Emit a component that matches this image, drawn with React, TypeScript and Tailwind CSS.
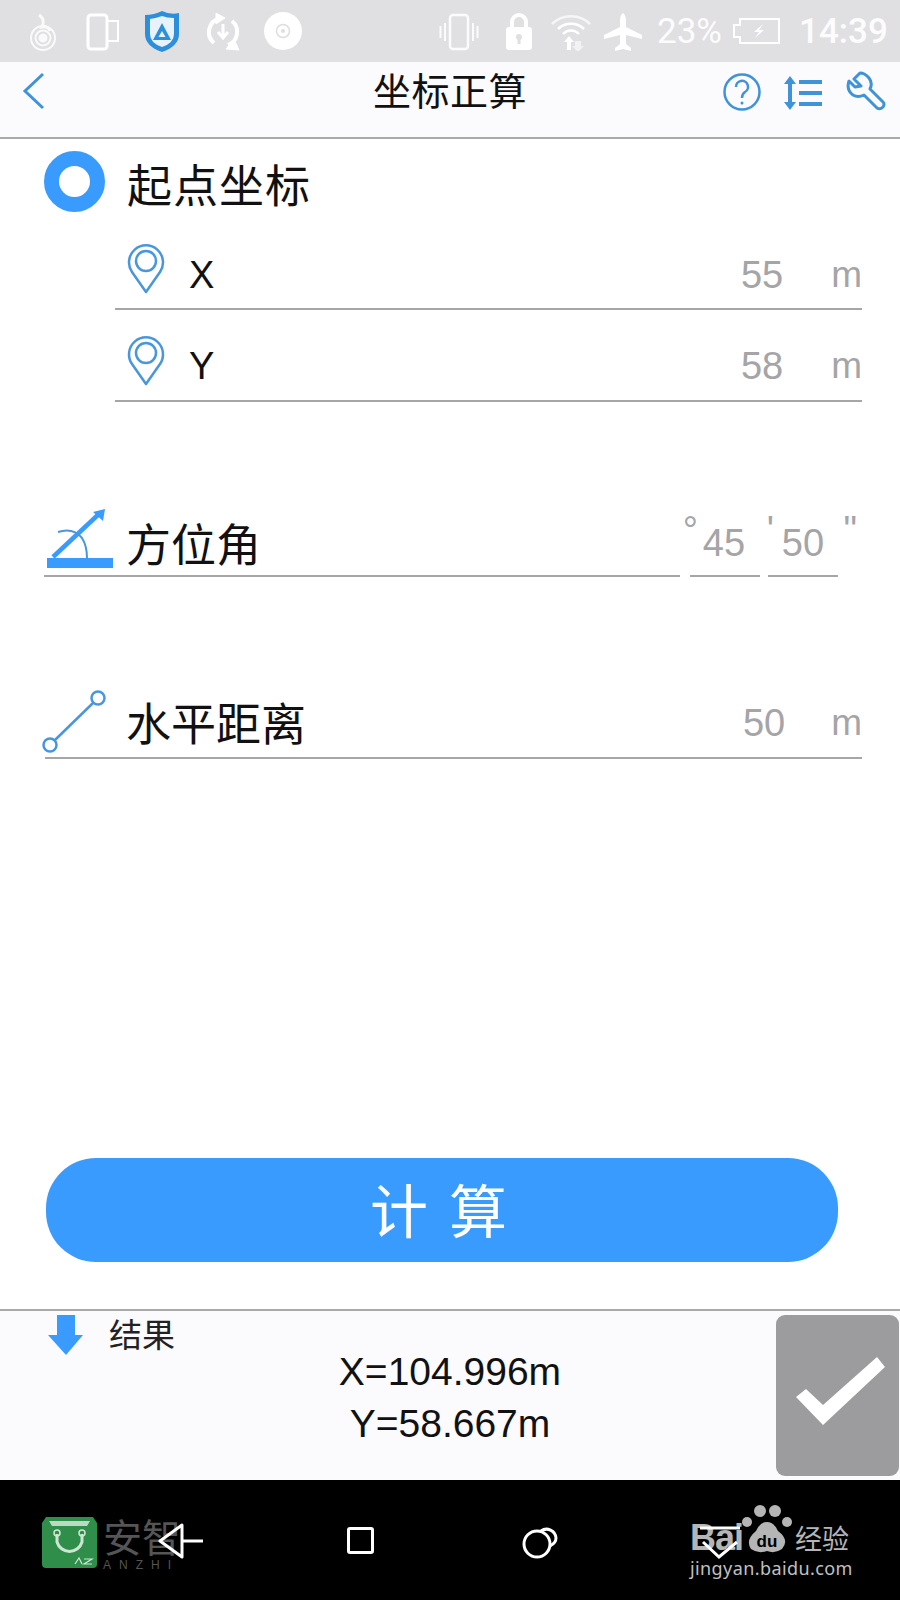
const CJK = "font-['Noto_Sans_CJK_SC','Noto_Sans',sans-serif]";
const LATIN = "font-['Liberation_Sans','Noto_Sans_CJK_SC',sans-serif]";

function StatusIcons() {
  return (
    <div className="h-[62px] bg-[#e0dfe2] flex items-center relative shrink-0 text-white">
      <svg className="absolute left-[28px] top-[13px]" width="30" height="38" viewBox="0 0 30 38" fill="none" stroke="#fff" strokeWidth="2" opacity="0.85">
        <path d="M11 2 c5 3 5 8 3 12 q6 -1 8 4" strokeWidth="3" />
        <circle cx="15" cy="25" r="12" />
        <circle cx="15" cy="25" r="7.5" />
        <circle cx="15" cy="25" r="3.5" fill="#fff" />
      </svg>
      <svg className="absolute left-[86px] top-[13px]" width="34" height="38" viewBox="0 0 34 38" fill="none" stroke="#fff">
        <rect x="2" y="2" width="19" height="34" rx="3" strokeWidth="3" />
        <rect x="21" y="8" width="11" height="20" strokeWidth="2" />
      </svg>
      <svg className="absolute left-[144px] top-[10px]" width="36" height="43" viewBox="0 0 36 43">
        <path d="M1 5 Q10 5 18 1 Q26 5 35 3 V24 Q35 36 18 42 Q1 36 1 24Z" fill="#2c8fdc" />
        <path d="M6 9 Q13 8 18 6 Q23 8 30 8 V24 Q30 33 18 37 Q6 33 6 24Z" fill="#e8f2fa" />
        <path d="M18 13 L27 30 H9Z" fill="#2c8fdc" />
        <path d="M18 21 L21.500 27 H14.500Z" fill="#e8f2fa" />
      </svg>
      <svg className="absolute left-[204px] top-[13px]" width="38" height="38" viewBox="0 0 38 38" fill="none" stroke="#fff" strokeWidth="4">
        <path d="M10 30 A14 14 0 0 1 16 5.500" />
        <path d="M28 8 A14 14 0 0 1 24 32" />
        <path d="M12 0 L21 5 L12 11Z" fill="#fff" strokeWidth="1" />
        <path d="M30 26 L35 37 L22 36Z" fill="#fff" strokeWidth="1" />
        <path d="M19 11 V24 M14 19 L19 25 L24 19" strokeWidth="3" />
      </svg>
      <svg className="absolute left-[264px] top-[12px]" width="38" height="38" viewBox="0 0 38 38" fill="none">
        <circle cx="19" cy="19" r="19" fill="#fff" />
        <circle cx="19" cy="19" r="6.500" stroke="#dedde0" strokeWidth="1.500" />
        <circle cx="19" cy="19" r="2" fill="#dedde0" />
      </svg>
      <svg className="absolute left-[439px] top-[13px]" width="40" height="38" viewBox="0 0 40 38" fill="none" stroke="#fff" opacity="0.9">
        <rect x="11" y="2" width="18" height="34" rx="3" strokeWidth="2.500" />
        <path d="M6 10 V28 M1.500 13 V25 M34 10 V28 M38.500 13 V25" strokeWidth="2" />
      </svg>
      <svg className="absolute left-[505px] top-[12px]" width="28" height="38" viewBox="0 0 28 38">
        <path d="M7 16 V10 A7 7 0 0 1 21 10 V16" fill="none" stroke="#fff" strokeWidth="4" />
        <rect x="1" y="15" width="26" height="23" rx="3" fill="#fff" />
        <circle cx="14" cy="25" r="3" fill="#e0dfe2" />
        <rect x="12.500" y="26" width="3" height="6" fill="#e0dfe2" />
      </svg>
      <svg className="absolute left-[550px] top-[11px]" width="42" height="40" viewBox="0 0 42 40" fill="none" stroke="#fff" strokeWidth="2.500">
        <path d="M2 13 A27 27 0 0 1 40 13" opacity="0.7" />
        <path d="M8 18 A19 19 0 0 1 34 18" />
        <path d="M13 23 A11 11 0 0 1 29 23" />
        <path d="M14 31 L19 25 L24 31 H21 V39 H17 V31Z" fill="#fff" stroke="none" />
        <path d="M25 30 H31 V35 H34 L28 41 L22 35 H25Z" fill="#fff" stroke="none" opacity="0.6" />
      </svg>
      <svg className="absolute left-[604px] top-[13px]" width="38" height="38" viewBox="0 0 38 38" fill="#fff">
        <path d="M19 0 Q22 2 22 8 V14 L38 22 V26 L22 22 V31 L27 35 V38 L19 36 L11 38 V35 L16 31 V22 L0 26 V22 L16 14 V8 Q16 2 19 0Z" />
      </svg>
      <span className="absolute left-[657px] top-[12px] text-[35px] leading-[40px] font-['Roboto',sans-serif] text-white/90">23%</span>
      <svg className="absolute left-[732px] top-[17px]" width="50" height="28" viewBox="0 0 50 28" fill="none" stroke="#fff" strokeWidth="2">
        <path d="M8 2 H47 V26 H8 V20 H2 V8 H8Z" />
        <path d="M31 7 L22 15 H27 L23 21 L32 13 H27Z" fill="#fff" stroke="none" />
      </svg>
      <span className="absolute left-[799px] top-[12px] text-[35px] leading-[40px] font-medium font-['Roboto',sans-serif] text-white/90">14:39</span>
    </div>
  );
}

function Header() {
  return (
    <div className="h-[77px] shrink-0 bg-[#fbfafc] border-b-2 border-[#a9a8ab] relative flex justify-center">
      <svg className="absolute left-[22px] top-[10px]" width="24" height="38" viewBox="0 0 24 38" fill="none" stroke="#3f93d9" strokeWidth="3">
        <path d="M21 2 L3 19 L21 36" />
      </svg>
      <span className={`${CJK} text-[38px] leading-[54px] text-[#111] tracking-[0.5px]`}>坐标正算</span>
      <svg className="absolute left-[722px] top-[10px]" width="40" height="40" viewBox="0 0 40 40" fill="none" stroke="#3f93d9" strokeWidth="2.500">
        <circle cx="20" cy="20" r="17.500" />
        <path d="M14 15 A6 6 0 1 1 23 20 Q20 22 20 26" />
        <circle cx="20" cy="31" r="1.500" fill="#3f93d9" stroke="none" />
      </svg>
      <svg className="absolute left-[784px] top-[14px]" width="40" height="34" viewBox="0 0 40 34" fill="#3f93d9">
        <path d="M6 0 L12 8 H8 V26 H12 L6 34 L0 26 H4 V8 H0Z" />
        <rect x="15" y="4" width="23" height="4" />
        <rect x="15" y="15" width="23" height="4" />
        <rect x="15" y="26" width="23" height="4" />
      </svg>
      <svg className="absolute left-[846px] top-[9px]" width="40" height="40" viewBox="0 0 40 40" fill="none" stroke="#3f93d9" strokeWidth="3" strokeLinejoin="round">
        <path d="M14 2 L8 8 L15 15 L9 16 L3 10 Q0 19 7 24 Q12 27 18 24 L31 37 Q34 39 37 36 Q39 33 37 31 L24 18 Q27 12 23 7 Q19 2 14 2Z" />
      </svg>
    </div>
  );
}

function Pin() {
  return (
    <svg width="38" height="50" viewBox="0 0 38 50" fill="none" stroke="#4a96dc" strokeWidth="2.500" className="shrink-0">
      <path d="M19 48 L5 28 A17 17 0 1 1 33 28Z" strokeLinejoin="round" />
      <circle cx="19" cy="17" r="10" />
    </svg>
  );
}

function CoordRow({ label, value, rowClass, pinClass }: { label: string; value: string; rowClass: string; pinClass: string }) {
  return (
    <div className={`${rowClass} ml-[115px] mr-[38px] border-b-2 border-[#a6a5a8] flex items-end relative`}>
      <div className={`${pinClass} ml-[12px]`}><Pin /></div>
      <span className={`${LATIN} text-[38px] leading-[44px] text-[#111] ml-[24px]`}>{label}</span>
      <span className={`${LATIN} text-[38px] leading-[44px] text-[#a5a4a7] ml-auto`}>{value}</span>
      <span className={`${LATIN} text-[37px] leading-[44px] text-[#a5a4a7] ml-[48px]`}>m</span>
    </div>
  );
}

function AngleIcon() {
  return (
    <svg width="70" height="62" viewBox="0 0 70 62" fill="none" className="absolute left-[1px] top-[2px]">
      <rect x="2" y="49" width="66" height="10" fill="#3a9bff" />
      <path d="M8 48 L55 4" stroke="#3a9bff" strokeWidth="4.500" />
      <path d="M48 3 L60 0 L58 12Z" fill="#3a9bff" />
      <path d="M13 23 Q28 18 37 29 Q42 37 42 49" stroke="#4a96dc" strokeWidth="2" />
    </svg>
  );
}

function Form() {
  return (
    <div className="flex-1 bg-white">
      <div className="mt-[11px] h-[62px] ml-[44px] flex items-center">
        <div className="w-[61px] h-[61px] rounded-full border-[15px] border-[#3a9bff]" />
        <span className={`${CJK} text-[45px] leading-[62px] text-[#111] ml-[22px] mt-[6px] tracking-[1px]`}>起点坐标</span>
      </div>
      <CoordRow label="X" value="55" rowClass="h-[98px] pb-[11px]" pinClass="mb-[3px]" />
      <CoordRow label="Y" value="58" rowClass="h-[92px] pb-[12px]" pinClass="mb-[2px]" />

      <div className="mt-[105px] h-[70px] ml-[44px] mr-[62px] flex">
        <div className="w-[636px] border-b-2 border-[#a6a5a8] relative flex items-end">
          <AngleIcon />
          <span className={`${CJK} text-[45px] leading-[60px] text-[#111] ml-[82px] mb-[2px]`}>方位角</span>
          <span className={`${LATIN} text-[38px] leading-none text-[#a5a4a7] absolute right-[-18px] top-[4px]`}>°</span>
        </div>
        <div className="w-[70px] ml-[10px] border-b-2 border-[#a6a5a8] relative flex justify-center items-end">
          <span className={`${LATIN} text-[38px] leading-[44px] text-[#a5a4a7] mb-[10px] mr-[2px]`}>45</span>
          <span className={`${LATIN} text-[38px] leading-none text-[#a5a4a7] absolute right-[-14px] top-[4px]`}>'</span>
        </div>
        <div className="w-[70px] ml-[8px] border-b-2 border-[#a6a5a8] relative flex justify-center items-end">
          <span className={`${LATIN} text-[38px] leading-[44px] text-[#a5a4a7] mb-[10px]`}>50</span>
          <span className={`${LATIN} text-[38px] leading-none text-[#a5a4a7] absolute right-[-19px] top-[4px]`}>"</span>
        </div>
      </div>

      <div className="mt-[112px] h-[70px] ml-[45px] mr-[38px] border-b-2 border-[#a6a5a8] flex items-end relative">
        <svg width="64" height="64" viewBox="0 0 64 64" fill="none" stroke="#4a96dc" strokeWidth="2.500" className="absolute left-0 top-[1px] overflow-visible">
          <circle cx="53" cy="8" r="6.500" />
          <circle cx="5" cy="55" r="6.500" />
          <path d="M48 13 L10 50" />
        </svg>
        <span className={`${CJK} text-[45px] leading-[60px] text-[#111] ml-[81px] mb-[5px]`}>水平距离</span>
        <span className={`${LATIN} text-[38px] leading-[44px] text-[#a5a4a7] ml-auto mb-[12px]`}>50</span>
        <span className={`${LATIN} text-[37px] leading-[44px] text-[#a5a4a7] ml-[46px] mb-[12px]`}>m</span>
      </div>

      <button className="mt-[399px] ml-[46px] w-[792px] h-[104px] rounded-[50px] bg-[#3a9bff] flex items-center justify-center">
        <span className={`${CJK} text-[58px] leading-none text-white tracking-[4px] ml-[-3px] mt-[-4px]`}>计 算</span>
      </button>
    </div>
  );
}

function Result() {
  return (
    <div className="h-[171px] shrink-0 bg-[#fbfafc] border-t-2 border-[#a9a8ab] relative flex">
      <svg className="absolute left-[47px] top-[3px]" width="38" height="42" viewBox="0 0 38 42" fill="#3a9bff">
        <path d="M10 1 H28 V21 H36 L19 41 L1 21 H10Z" />
      </svg>
      <span className={`${CJK} text-[33px] leading-[44px] text-[#222] absolute left-[109px] top-0`}>结果</span>
      <div className={`${LATIN} w-[900px] text-center text-[39px] leading-[52px] text-[#111] pt-[35px]`}>
        <div>X=104.996m</div>
        <div>Y=58.667m</div>
      </div>
      <div className="absolute left-[776px] top-[4px] w-[123px] h-[161px] rounded-[9px] bg-[#9c9b9e] flex items-center justify-center">
        <svg width="89" height="68" viewBox="0 0 89 68" fill="#fff" className="ml-[5px] mb-[9px]">
          <path d="M0 40 L10 32 L27 48 L81 0 L89 10 L27 68Z" />
        </svg>
      </div>
    </div>
  );
}

function NavBar() {
  return (
    <div className="h-[120px] shrink-0 bg-black relative">
      {/* watermark left */}
      <div className="absolute left-[42px] top-[37px] flex items-start">
        <svg width="55" height="51" viewBox="0 0 55 51">
          <path d="M4 0 H51 L55 6 V47 Q55 51 51 51 H4 Q0 51 0 47 V6Z" fill="#2f8f4a" />
          <path d="M7 4 H48 L45 9 H10Z" fill="#bcd9c3" />
          <path d="M15 17 V25 A13 13 0 0 0 40 25 V17" fill="none" stroke="#cfe5d4" strokeWidth="3" />
          <circle cx="15" cy="16" r="3" fill="none" stroke="#cfe5d4" strokeWidth="1.500" />
          <circle cx="40" cy="16" r="3" fill="none" stroke="#cfe5d4" strokeWidth="1.500" />
          <path d="M33 47 L37 41 L40 47 M42 42 H50 L42 47 H50" fill="none" stroke="#cfe5d4" strokeWidth="1.200" />
        </svg>
        <div className="ml-[6px] w-[80px] flex flex-col items-start">
          <span className={`${CJK} text-[39px] leading-[40px] text-[#555] whitespace-nowrap -mt-[2px]`}>安智</span>
          <span className={`${LATIN} text-[12px] leading-[12px] text-[#555] tracking-[8px] whitespace-nowrap mt-[4px]`}>ANZHI</span>
        </div>
      </div>

      <svg className="absolute left-[157px] top-[43px]" width="48" height="36" viewBox="0 0 48 36" fill="none" stroke="#fff" strokeWidth="3">
        <path d="M25 2 L3 18 L25 34 Z" strokeLinejoin="round" />
        <path d="M25 18 H46" />
      </svg>
      <div className="absolute left-[347px] top-[47px] w-[27px] h-[27px] rounded-[3px] border-[3px] border-white" />
      <svg className="absolute left-[522px] top-[44px]" width="38" height="36" viewBox="0 0 38 36" fill="none" stroke="#fff" strokeWidth="3">
        <circle cx="15" cy="20" r="13" />
        <path d="M19 7 A9.500 9.500 0 0 1 34 14 Q34 19 28 22" />
      </svg>

      {/* watermark right */}
      <div className="absolute left-[690px] top-[24px] w-[165px]">
        <div className="flex items-end h-[50px]">
          <span className="font-['Liberation_Sans',sans-serif] font-bold text-[36px] leading-[32px] text-[#b5b5b5] tracking-[-1px]">Bai</span>
          <svg width="50" height="50" viewBox="0 0 50 50" fill="#b5b5b5" className="shrink-0 -ml-[1px]">
            <circle cx="5" cy="18" r="5" />
            <circle cx="18" cy="7" r="6" />
            <circle cx="33" cy="7" r="6" />
            <circle cx="45" cy="18" r="5" />
            <path d="M25 18 Q32 18 36 27 Q48 36 40 45 Q33 50 25 47 Q16 50 9 45 Q3 36 14 27 Q18 18 25 18Z" />
            <text x="25" y="43" fontSize="17" fontWeight="700" textAnchor="middle" fill="#000" fontFamily="Liberation Sans">du</text>
          </svg>
          <span className={`${CJK} text-[27px] leading-[32px] text-[#b5b5b5] ml-[3px] whitespace-nowrap`}>经验</span>
        </div>
        <div className="font-['Noto_Sans',sans-serif] text-[18px] leading-[24px] text-[#c0c0c0] mt-[2px] whitespace-nowrap tracking-[0.4px]">jingyan.baidu.com</div>
      </div>

      <svg className="absolute left-[699px] top-[46px]" width="42" height="34" viewBox="0 0 42 34" fill="none" stroke="#fff" strokeWidth="3">
        <path d="M1 2 H41" />
        <path d="M4 16 L20 31 L38 16" />
      </svg>
    </div>
  );
}

export default function App() {
  return (
    <div className="w-[900px] h-[1600px] flex flex-col overflow-hidden bg-white">
      <StatusIcons />
      <Header />
      <Form />
      <Result />
      <NavBar />
    </div>
  );
}
